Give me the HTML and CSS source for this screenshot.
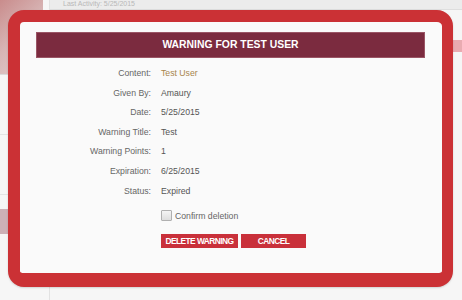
FILE: index.html
```html
<!DOCTYPE html>
<html>
<head>
<meta charset="utf-8">
<link rel="stylesheet" href="styles.css">
</head>
<body>
<div class="page">
  <div class="side">
    <div class="avatar"></div>
    <div class="side-item">1</div>
    <div class="side-item">7</div>
    <div class="side-pink"></div>
  </div>
  <div class="main">
    <div class="topbar">Last Activity: 5/25/2015</div>
    <div class="right-pink"></div>
  </div>
</div>

<div class="modal">
  <div class="modal-title">WARNING FOR TEST USER</div>
  <div class="details">
    <div class="label">Content:</div><div class="value link">Test User</div>
    <div class="label">Given By:</div><div class="value">Amaury</div>
    <div class="label">Date:</div><div class="value">5/25/2015</div>
    <div class="label">Warning Title:</div><div class="value">Test</div>
    <div class="label">Warning Points:</div><div class="value">1</div>
    <div class="label">Expiration:</div><div class="value">6/25/2015</div>
    <div class="label">Status:</div><div class="value">Expired</div>
  </div>
  <div class="confirm">
    <span class="checkbox"></span><span>Confirm deletion</span>
  </div>
  <div class="actions">
    <button class="btn btn-delete">DELETE WARNING</button>
    <button class="btn btn-cancel">CANCEL</button>
  </div>
</div>
</body>
</html>
```

FILE: styles.css
```css
html, body {
  margin: 0;
  padding: 0;
}
body {
  width: 462px;
  height: 300px;
  overflow: hidden;
  background: #f6f6f6;
  font-family: "Liberation Sans", Arial, sans-serif;
  position: relative;
}
.page {
  display: flex;
  height: 300px;
}
.side {
  width: 49px;
  border-right: 1px solid #e2e2e2;
  display: flex;
  flex-direction: column;
}
.avatar {
  width: 43px;
  height: 74px;
  background: linear-gradient(135deg, #c98c8c 0%, #d7b4b4 45%, #e2d2d2 100%);
  border-bottom: 1px solid #dcdcdc;
}
.side-item {
  height: 60px;
  font-size: 7px;
  color: #cfcfcf;
  padding: 18px 0 0 12px;
  box-sizing: border-box;
  border-bottom: 1px solid #e4e4e4;
}
.side-pink {
  margin-top: 14px;
  height: 25px;
  width: 43px;
  background: #cdb0b6;
}
.main {
  flex: 1;
  position: relative;
}
.topbar {
  height: 9px;
  background: #ececec;
  border-bottom: 1px solid #dedede;
  font-size: 7px;
  line-height: 8px;
  color: #b8b8b8;
  padding-left: 13px;
  overflow: hidden;
}
.right-pink {
  margin: 30px 0 0 auto;
  width: 12px;
  height: 12px;
  background: #e9abb1;
}

.modal {
  position: absolute;
  left: 8px;
  top: 10px;
  width: 445px;
  height: 277px;
  box-sizing: border-box;
  border: 12px solid #cb3135;
  border-bottom-width: 14px;
  border-right-width: 11px;
  border-radius: 16px;
  background: #fafafa;
  padding: 10px 17px 0 16px;
  box-shadow: 0 1px 2px rgba(0,0,0,0.15);
}
.modal-title {
  height: 26px;
  box-sizing: border-box;
  background: #7b2b3f;
  border: 1px solid #9a5565;
  color: #ffffff;
  font-weight: bold;
  font-size: 10.4px;
  line-height: 24px;
  text-align: center;
}
.details {
  display: grid;
  grid-template-columns: 115px 1fr;
  column-gap: 10px;
  margin-top: 6px;
  font-size: 8.7px;
  line-height: 19.6px;
}
.label {
  text-align: right;
  color: #666666;
}
.value {
  color: #555555;
}
.link {
  color: #a8854c;
}
.confirm {
  display: flex;
  align-items: center;
  gap: 3px;
  margin: 5px 0 0 125px;
  height: 19.6px;
  font-size: 8.7px;
  color: #666;
}
.checkbox {
  width: 9px;
  height: 9px;
  border: 1px solid #b0b0b0;
  background: linear-gradient(#f4f4f4, #dedede);
  border-radius: 1px;
}
.actions {
  display: flex;
  gap: 3px;
  margin: 8px 0 0 125px;
}
.btn {
  height: 14px;
  border: none;
  padding: 0;
  background: #c9303a;
  color: #fff;
  font-family: "Liberation Sans", Arial, sans-serif;
  font-weight: bold;
  font-size: 8.4px;
  letter-spacing: -0.55px;
  line-height: 14px;
  text-align: center;
}
.btn-delete { width: 77px; }
.btn-cancel { width: 65px; }
```
